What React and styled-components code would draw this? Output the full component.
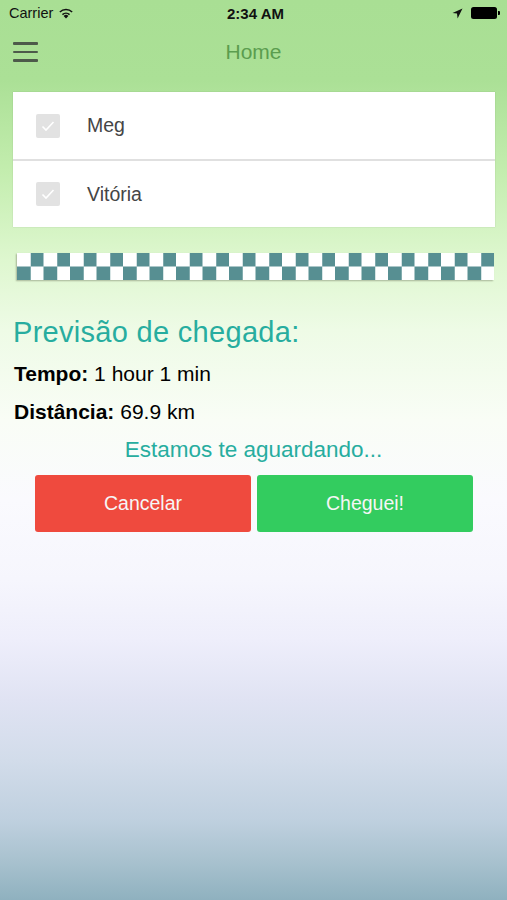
import React from "react";
import styled, { createGlobalStyle } from "styled-components";

const GlobalStyle = createGlobalStyle`
  html, body { margin: 0; padding: 0; }
  *, *::before, *::after { box-sizing: border-box; }
  body {
    font-family: "Liberation Sans", Arial, sans-serif;
    -webkit-font-smoothing: antialiased;
  }
`;

const Screen = styled.div`
  width: 507px;
  height: 900px;
  overflow: hidden;
  display: flex;
  flex-direction: column;
  background: linear-gradient(
    to bottom,
    #a9df94 0px,
    #abe096 80px,
    #c3edae 170px,
    #def7cf 260px,
    #eefbe6 330px,
    #f9fdf6 420px,
    #fafafe 500px,
    #f6f6fd 580px,
    #eeeefb 640px,
    #e0e3f3 700px,
    #d2dcea 760px,
    #bfd0df 820px,
    #a9c2cf 860px,
    #8fb1bf 900px
  );
`;

const StatusBar = styled.div`
  height: 26px;
  display: grid;
  grid-template-columns: 1fr auto 1fr;
  align-items: center;
  padding: 0 7px 0 9px;
  font-size: 14.5px;
  color: #111;
`;

const StatusLeft = styled.div`
  display: flex;
  align-items: center;
  gap: 5px;
`;

const StatusTime = styled.div`
  font-weight: bold;
  font-size: 15px;
  padding-left: 2px;
`;

const StatusRight = styled.div`
  display: flex;
  align-items: center;
  justify-content: flex-end;
  gap: 8px;
`;

const Battery = styled.div`
  width: 26px;
  height: 12px;
  background: #000;
  border-radius: 2.5px;
  position: relative;
  margin-right: 3px;
  &::after {
    content: "";
    position: absolute;
    right: -3px;
    top: 4px;
    width: 2px;
    height: 4px;
    background: #000;
    border-radius: 0 1px 1px 0;
  }
`;

const NavBar = styled.div`
  height: 52px;
  display: grid;
  grid-template-columns: 60px 1fr 60px;
  align-items: center;
  padding: 0 0 0 13px;
`;

const MenuButton = styled.div`
  width: 25px;
  display: flex;
  flex-direction: column;
  gap: 5.5px;
  & > span {
    display: block;
    height: 2.8px;
    background: #4d5a4a;
    border-radius: 1px;
  }
`;

const NavTitle = styled.div`
  text-align: center;
  color: #5b9d4f;
  font-size: 21px;
  margin-right: 13px;
`;

const Card = styled.div`
  margin: 14px 12px 0 13px;
  background: #fff;
  box-shadow: 0 0 1px rgba(0, 0, 0, 0.22);
  display: flex;
  flex-direction: column;
`;

const Row = styled.div`
  height: ${(p) => p.$h}px;
  display: flex;
  align-items: center;
  padding-left: 23px;
  gap: 27px;
  border-top: ${(p) => (p.$divider ? "2px solid #e0e0e0" : "none")};
`;

const CheckBox = styled.div`
  width: 24px;
  height: 24px;
  border-radius: 2px;
  background: #e2e2e2;
  display: flex;
  align-items: center;
  justify-content: center;
`;

const RowLabel = styled.span`
  font-size: 19.5px;
  color: #454545;
`;

const Checker = styled.div`
  margin: 26px 13px 0 17px;
  height: 26.5px;
  background-image: conic-gradient(
    #578f92 0 25%,
    #ffffff 0 50%,
    #578f92 0 75%,
    #ffffff 0
  );
  background-size: 26.5px 26.5px;
  box-shadow: -1px 1px 1.5px rgba(60, 60, 40, 0.35);
`;

const Info = styled.div`
  padding: 36px 0 0 13px;
  display: flex;
  flex-direction: column;
`;

const Heading = styled.div`
  font-size: 29px;
  line-height: 32px;
  letter-spacing: 0.3px;
  color: #27ad9f;
  margin-bottom: 7px;
`;

const InfoLine = styled.div`
  font-size: 21px;
  line-height: 38px;
  color: #000;
  padding-left: 1px;
  & > b {
    font-weight: bold;
  }
`;

const Waiting = styled.div`
  text-align: center;
  color: #27ad9f;
  font-size: 22.5px;
  line-height: 38px;
`;

const Buttons = styled.div`
  display: grid;
  grid-template-columns: 1fr 1fr;
  gap: 6px;
  padding: 6px 34px 0 35px;
`;

const ActionButton = styled.div`
  height: 57px;
  border-radius: 3px;
  background: ${(p) => p.$bg};
  color: #f6f6f6;
  font-size: 19.5px;
  display: flex;
  align-items: center;
  justify-content: center;
`;

const Wifi = () => (
  <svg width="16" height="12" viewBox="0 0 16 12">
    <path d="M8 11.5 L5.6 8.9 A3.4 3.4 0 0 1 10.4 8.9 Z" fill="#111" />
    <path d="M3.9 7.1 A5.9 5.9 0 0 1 12.1 7.1 L11 8.2 A4.4 4.4 0 0 0 5 8.2 Z" fill="#111" />
    <path d="M1.3 4.5 A9.5 9.5 0 0 1 14.7 4.5 L13.6 5.6 A8 8 0 0 0 2.4 5.6 Z" fill="#111" />
  </svg>
);

const LocationArrow = () => (
  <svg width="11" height="11" viewBox="0 0 11 11">
    <path d="M10.5 0.5 L0.5 5 L5 5.6 L5.6 10.5 Z" fill="#111" />
  </svg>
);

const Check = () => (
  <svg width="14" height="12" viewBox="0 0 14 12">
    <path d="M1.5 6.5 L5 10 L12.5 2" fill="none" stroke="#fff" strokeWidth="1.6" />
  </svg>
);

export default function App() {
  return (
    <>
      <GlobalStyle />
      <Screen>
        <StatusBar>
          <StatusLeft>
            <span>Carrier</span>
            <Wifi />
          </StatusLeft>
          <StatusTime>2:34 AM</StatusTime>
          <StatusRight>
            <LocationArrow />
            <Battery />
          </StatusRight>
        </StatusBar>
        <NavBar>
          <MenuButton>
            <span />
            <span />
            <span />
          </MenuButton>
          <NavTitle>Home</NavTitle>
          <div />
        </NavBar>
        <Card>
          <Row $h={67}>
            <CheckBox>
              <Check />
            </CheckBox>
            <RowLabel>Meg</RowLabel>
          </Row>
          <Row $h={68} $divider>
            <CheckBox>
              <Check />
            </CheckBox>
            <RowLabel>Vitória</RowLabel>
          </Row>
        </Card>
        <Checker />
        <Info>
          <Heading>Previsão de chegada:</Heading>
          <InfoLine>
            <b>Tempo:</b> 1 hour 1 min
          </InfoLine>
          <InfoLine>
            <b>Distância:</b> 69.9 km
          </InfoLine>
        </Info>
        <Waiting>Estamos te aguardando...</Waiting>
        <Buttons>
          <ActionButton $bg="#ef4a3e">Cancelar</ActionButton>
          <ActionButton $bg="#33cc5f">Cheguei!</ActionButton>
        </Buttons>
      </Screen>
    </>
  );
}
